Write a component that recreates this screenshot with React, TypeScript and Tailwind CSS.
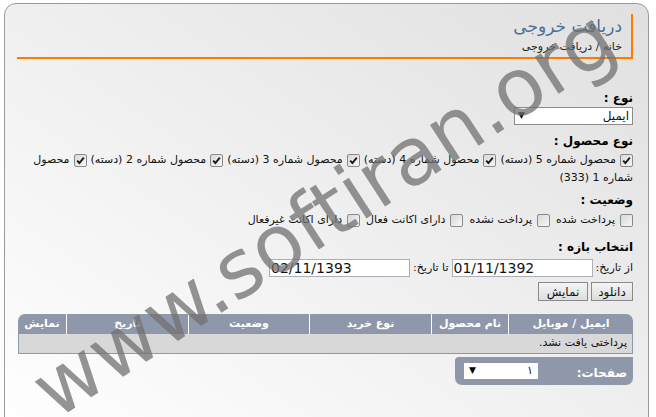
import React from "react";

const Box = ({ checked }: { checked?: boolean }) => (
  <span className="inline-flex w-[13px] h-[13px] shrink-0 items-center justify-center rounded-[2px] border border-[#8a8a8a] bg-linear-to-br from-[#d8d8d8] to-[#f7f7f7] align-[-3px]">
    {checked && (
      <svg width="9" height="9" viewBox="0 0 9 9">
        <path d="M1.2 4.6 L3.4 7 L7.8 1.6" stroke="#1a1a1a" strokeWidth="1.9" fill="none" />
      </svg>
    )}
  </span>
);

const Label = ({ children }: { children: React.ReactNode }) => (
  <div className="h-[15px] text-[12px] leading-[15px] font-bold text-black">{children}</div>
);

const products = [
  "محصول شماره 5 (دسته)",
  "محصول شماره 4 (دسته)",
  "محصول شماره 3 (دسته)",
  "محصول شماره 2 (دسته)",
];

const statuses = ["پرداخت شده", "پرداخت نشده", "دارای اکانت فعال", "دارای اکانت غیرفعال"];

const cols = [
  { t: "ایمیل / موبایل", w: "w-[125px]" },
  { t: "نام محصول", w: "w-[77px]" },
  { t: "نوع خرید", w: "w-[122px]" },
  { t: "وضعیت", w: "w-[121px]" },
  { t: "تاریخ", w: "w-[122px]" },
  { t: "نمایش", w: "flex-1" },
];

export default function App() {
  return (
    <div className="relative w-[656px] h-[417px] overflow-hidden bg-white font-['DejaVu_Sans',sans-serif] text-[11px] text-[#111]">
      <div
        dir="rtl"
        className="ml-[4px] mt-[3px] w-[645px] h-[430px] rounded-t-[12px] border border-[#9a9a9a] bg-linear-to-bl from-[#e0e0e0] to-white pl-[12px] pr-[15px] pt-[10px]"
      >
        {/* header */}
        <div className="h-[45px] border-r-2 border-b-2 border-[#ff7b00] pr-[9px]">
          <div className="h-[24px] text-[17px] leading-[24px] text-[#4a6e9c]">دریافت خروجی</div>
          <div className="mt-[2px] text-[11px] leading-[14px] text-[#222]">خانه / دریافت خروجی</div>
        </div>

        <div className="mt-[32px]">
          <Label>نوع :</Label>
        </div>
        <div className="mt-[1px] flex h-[18px] w-[119px] items-center justify-between border border-[#8b8b8b] bg-white px-[3px]">
          <span className="text-[12px] leading-[16px]">ایمیل</span>
          <span className="text-[9px] text-black">▼</span>
        </div>

        <div className="mt-[9px]">
          <Label>نوع محصول :</Label>
        </div>
        <div className="mt-[2px] text-[11px] leading-[18px]">
          <div className="flex h-[18px] items-center gap-[4px] whitespace-nowrap">
            {products.map((p) => (
              <span key={p} className="flex items-center gap-[4px]">
                <Box checked />
                <span>{p}</span>
              </span>
            ))}
            <span className="flex items-center gap-[4px]">
              <Box checked />
              <span>محصول</span>
            </span>
          </div>
          <div className="h-[18px]">شماره 1 (333)</div>
        </div>

        <div className="mt-[6px]">
          <Label>وضعیت :</Label>
        </div>
        <div className="mt-[3px] flex h-[18px] items-center gap-[6px] whitespace-nowrap">
          {statuses.map((s) => (
            <span key={s} className="flex items-center gap-[5px]">
              <Box />
              <span>{s}</span>
            </span>
          ))}
        </div>

        <div className="mt-[11px]">
          <Label>انتخاب بازه :</Label>
        </div>
        <div className="mt-[4px] flex h-[18px] items-center gap-[3px]">
          <span>از تاریخ:</span>
          <div dir="ltr" className="flex h-[18px] w-[141px] items-center border border-[#a9b0b9] bg-white px-[1px] text-[14px] leading-[16px]">
            01/11/1392
          </div>
          <span>تا تاریخ:</span>
          <div dir="ltr" className="flex h-[18px] w-[141px] items-center border border-[#a9b0b9] bg-white px-[1px] text-[14px] leading-[16px]">
            02/11/1393
          </div>
        </div>

        <div className="mt-[5px] flex gap-[3px]">
          <button className="h-[19px] w-[42px] border border-[#8a8a8a] bg-linear-to-b from-[#f4f4f4] to-[#dedede] text-[12px] leading-[16px] text-[#111]">
            دانلود
          </button>
          <button className="h-[19px] w-[50px] border border-[#8a8a8a] bg-linear-to-b from-[#f4f4f4] to-[#dedede] text-[12px] leading-[16px] text-[#111]">
            نمایش
          </button>
        </div>

        {/* table */}
        <div className="mt-[13px] mr-0 ml-[1px]">
          <div className="flex h-[20px] overflow-hidden rounded-t-[7px] bg-[#8f97aa] text-[11px] font-bold text-white">
            {cols.map((c, i) => (
              <div
                key={c.t}
                className={`${c.w} flex items-center justify-center ${i < cols.length - 1 ? "border-l border-white" : ""}`}
              >
                {c.t}
              </div>
            ))}
          </div>
          <div className="flex h-[20px] items-center border border-t-0 border-[#8f97aa] bg-[#d8d8d8] pr-[5px] text-[11px] text-[#111]">
            پرداختی یافت نشد.
          </div>
          <div className="mt-[3px] flex h-[28px] w-[178px] items-center justify-between rounded-b-[7px] rounded-tl-[4px] bg-[#8f97aa] pl-[9px] pr-[6px]">
            <span className="mt-[3px] text-[12px] font-bold text-white">صفحات:</span>
            <div className="flex h-[16px] w-[74px] items-center justify-between bg-white px-[5px]">
              <span className="text-[11px]">۱</span>
              <span className="text-[9px] text-black">▼</span>
            </div>
          </div>
        </div>
      </div>

      {/* watermark */}
      <div className="pointer-events-none absolute left-[324px] top-[214px] -translate-x-1/2 -translate-y-1/2 -rotate-[33deg] whitespace-nowrap font-['DejaVu_Sans',sans-serif] text-[80px] leading-none text-[#707070]/75">
        www.softiran.org
      </div>
    </div>
  );
}
